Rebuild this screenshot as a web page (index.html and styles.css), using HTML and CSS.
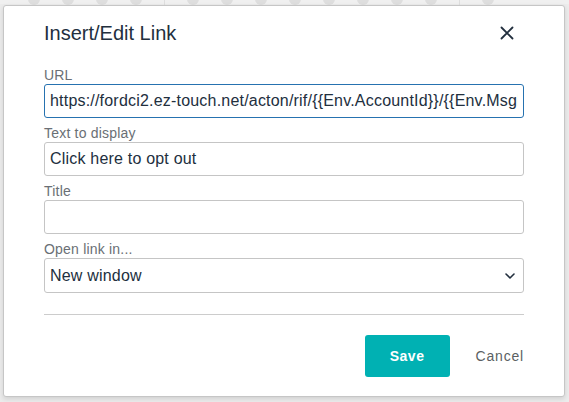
FILE: index.html
```html
<!DOCTYPE html>
<html lang="en">
<head>
  <meta charset="UTF-8">
  <title>Insert/Edit Link</title>
  <meta name="viewport" content="width=device-width, initial-scale=1.0">
  <link rel="stylesheet" href="styles.css">
</head>
<body>

<!-- editor toolbar behind the dialog -->
<div class="toolbar">
  <span class="tb-icon"></span>
  <span class="tb-icon"></span>
  <span class="tb-icon"></span>
  <span class="tb-icon"></span>
  <span class="tb-sep"></span>
  <span class="tb-icon"></span>
  <span class="tb-icon"></span>
  <span class="tb-icon"></span>
  <span class="tb-icon"></span>
  <span class="tb-icon"></span>
  <span class="tb-icon"></span>
  <span class="tb-icon"></span>
  <span class="tb-icon"></span>
  <span class="tb-sep"></span>
  <span class="tb-icon"></span>
</div>

<!-- Dialog -->
<div class="dialog" role="dialog" aria-labelledby="dialogTitle">
  <div class="dialog-header">
    <h1 id="dialogTitle">Insert/Edit Link</h1>
    <button type="button" class="close" aria-label="Close">
      <svg width="14" height="14" viewBox="0 0 14 14">
        <path d="M1.5 1.5 L12.5 12.5 M12.5 1.5 L1.5 12.5" stroke="#222f3e" stroke-width="1.8" stroke-linecap="round"/>
      </svg>
    </button>
  </div>

  <form class="fields">
    <div class="field">
      <label for="url">URL</label>
      <input type="text" id="url" class="focused" value="https://fordci2.ez-touch.net/acton/rif/{{Env.AccountId}}/{{Env.MsgId}}/-/-/-/-/optout">
    </div>
    <div class="field">
      <label for="text">Text to display</label>
      <input type="text" id="text" value="Click here to opt out">
    </div>
    <div class="field">
      <label for="title">Title</label>
      <input type="text" id="title">
    </div>
    <div class="field">
      <label for="target">Open link in...</label>
      <div class="select-wrap">
        <select id="target">
          <option>Current window</option>
          <option selected>New window</option>
        </select>
        <svg class="chevron" width="10" height="6" viewBox="0 0 10 6">
          <path d="M1 1 L5 5 L9 1" fill="none" stroke="#222f3e" stroke-width="1.6" stroke-linecap="round" stroke-linejoin="round"/>
        </svg>
      </div>
    </div>
  </form>

  <hr class="divider">

  <div class="dialog-footer">
    <button type="button" class="btn-save">Save</button>
    <button type="button" class="btn-cancel">Cancel</button>
  </div>
</div>

</body>
</html>
```

FILE: styles.css
```css
body {
  font-family: "Liberation Sans", Arial, sans-serif;
  background-color: #ececec;
  margin: 0;
  padding: 0;
  height: 402px;
  overflow: hidden;
}

.toolbar {
  display: flex;
  align-items: center;
  gap: 22px;
  height: 10px;
  padding: 0 28px;
  margin-top: -6px;
  background-color: #f0f0f0;
}

.tb-icon {
  width: 12px;
  height: 12px;
  border-radius: 50%;
  background-color: #dedede;
}

.tb-sep {
  width: 1px;
  height: 12px;
  background-color: #dedede;
}

.dialog {
  position: absolute;
  left: 3px;
  top: 5px;
  width: 562px;
  height: 392px;
  box-sizing: border-box;
  padding: 0 40px;
  background-color: #fff;
  border: 1px solid #c6c6c6;
  border-radius: 3px;
  box-shadow: 0 2px 5px rgba(0, 0, 0, 0.12);
}

.dialog-header {
  display: flex;
  align-items: center;
  justify-content: space-between;
  padding-top: 15px;
  margin-bottom: 21px;
}

.dialog-header h1 {
  margin: 0;
  font-size: 20px;
  line-height: 24px;
  font-weight: normal;
  color: #222f3e;
}

.close {
  display: flex;
  background: none;
  border: none;
  padding: 0;
  margin-right: 10px;
  cursor: pointer;
}

.fields {
  display: flex;
  flex-direction: column;
  gap: 6px;
}

.field label {
  display: block;
  font-size: 14px;
  line-height: 18px;
  letter-spacing: 0.2px;
  color: #6a6f75;
}

.field input, .field select {
  display: block;
  width: 100%;
  height: 34px;
  box-sizing: border-box;
  margin: 0;
  padding: 0 5px;
  font-family: inherit;
  font-size: 16px;
  letter-spacing: 0.2px;
  color: #222f3e;
  background-color: #fff;
  border: 1px solid #c5c5c5;
  border-radius: 3px;
  outline: none;
}

.field input.focused {
  border-color: #2672b0;
}

.select-wrap {
  position: relative;
}

.field select {
  height: 35px;
  appearance: none;
  -webkit-appearance: none;
}

.chevron {
  position: absolute;
  right: 9px;
  top: 15px;
  pointer-events: none;
}

.divider {
  margin: 21px 0 0;
  border: none;
  border-top: 1px solid #cccccc;
}

.dialog-footer {
  display: flex;
  justify-content: flex-end;
  align-items: center;
  gap: 26px;
  margin-top: 20px;
}

.btn-save {
  width: 85px;
  height: 42px;
  background-color: #00b1b3;
  color: #fff;
  border: none;
  border-radius: 3px;
  font-family: inherit;
  font-size: 14px;
  font-weight: bold;
  letter-spacing: 0.5px;
  cursor: pointer;
}

.btn-cancel {
  background: none;
  border: none;
  padding: 0;
  font-family: inherit;
  font-size: 14px;
  letter-spacing: 0.8px;
  color: #5b5f63;
  cursor: pointer;
}
```
